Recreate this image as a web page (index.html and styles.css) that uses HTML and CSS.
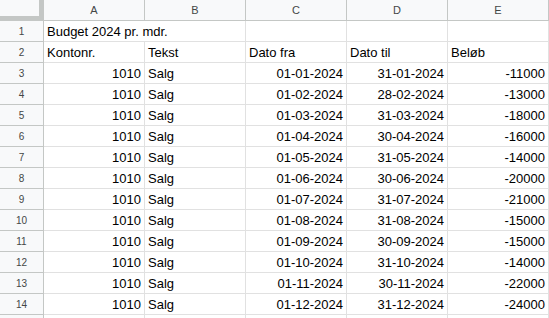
FILE: index.html
```html
<!DOCTYPE html>
<html>
<head>
<meta charset="utf-8">
<link rel="stylesheet" href="styles.css">
</head>
<body>
<div class="sheet">
  <div class="corner"></div>
  <div class="colhead">A</div>
  <div class="colhead">B</div>
  <div class="colhead">C</div>
  <div class="colhead">D</div>
  <div class="colhead last">E</div>

  <div class="rowhead">1</div>
  <div class="cell span2">Budget 2024 pr. mdr.</div>
  <div class="cell"></div>
  <div class="cell"></div>
  <div class="cell last"></div>

  <div class="rowhead">2</div>
  <div class="cell">Kontonr.</div>
  <div class="cell">Tekst</div>
  <div class="cell">Dato fra</div>
  <div class="cell">Dato til</div>
  <div class="cell last">Beløb</div>

  <div class="rowhead">3</div>
  <div class="cell num">1010</div><div class="cell">Salg</div><div class="cell num">01-01-2024</div><div class="cell num">31-01-2024</div><div class="cell num last">-11000</div>
  <div class="rowhead">4</div>
  <div class="cell num">1010</div><div class="cell">Salg</div><div class="cell num">01-02-2024</div><div class="cell num">28-02-2024</div><div class="cell num last">-13000</div>
  <div class="rowhead">5</div>
  <div class="cell num">1010</div><div class="cell">Salg</div><div class="cell num">01-03-2024</div><div class="cell num">31-03-2024</div><div class="cell num last">-18000</div>
  <div class="rowhead">6</div>
  <div class="cell num">1010</div><div class="cell">Salg</div><div class="cell num">01-04-2024</div><div class="cell num">30-04-2024</div><div class="cell num last">-16000</div>
  <div class="rowhead">7</div>
  <div class="cell num">1010</div><div class="cell">Salg</div><div class="cell num">01-05-2024</div><div class="cell num">31-05-2024</div><div class="cell num last">-14000</div>
  <div class="rowhead">8</div>
  <div class="cell num">1010</div><div class="cell">Salg</div><div class="cell num">01-06-2024</div><div class="cell num">30-06-2024</div><div class="cell num last">-20000</div>
  <div class="rowhead">9</div>
  <div class="cell num">1010</div><div class="cell">Salg</div><div class="cell num">01-07-2024</div><div class="cell num">31-07-2024</div><div class="cell num last">-21000</div>
  <div class="rowhead">10</div>
  <div class="cell num">1010</div><div class="cell">Salg</div><div class="cell num">01-08-2024</div><div class="cell num">31-08-2024</div><div class="cell num last">-15000</div>
  <div class="rowhead">11</div>
  <div class="cell num">1010</div><div class="cell">Salg</div><div class="cell num">01-09-2024</div><div class="cell num">30-09-2024</div><div class="cell num last">-15000</div>
  <div class="rowhead">12</div>
  <div class="cell num">1010</div><div class="cell">Salg</div><div class="cell num">01-10-2024</div><div class="cell num">31-10-2024</div><div class="cell num last">-14000</div>
  <div class="rowhead">13</div>
  <div class="cell num">1010</div><div class="cell">Salg</div><div class="cell num">01-11-2024</div><div class="cell num">30-11-2024</div><div class="cell num last">-22000</div>
  <div class="rowhead">14</div>
  <div class="cell num">1010</div><div class="cell">Salg</div><div class="cell num">01-12-2024</div><div class="cell num">31-12-2024</div><div class="cell num last">-24000</div>
  <div class="rowhead"></div>
  <div class="cell"></div><div class="cell"></div><div class="cell"></div><div class="cell"></div><div class="cell last"></div>
</div>
</body>
</html>
```

FILE: styles.css
```css
html, body {
  margin: 0;
  padding: 0;
  background: #ffffff;
  overflow: hidden;
}
.sheet {
  display: grid;
  grid-template-columns: 44px repeat(5, 101px);
  grid-auto-rows: 21px;
  font-family: "Liberation Sans", Arial, sans-serif;
  width: 549px;
  height: 318px;
  overflow: hidden;
}
.corner {
  box-sizing: border-box;
  background: #f8f9fa;
  border-right: 5px solid #c4c7c5;
  border-bottom: 5px solid #c4c7c5;
}
.colhead {
  box-sizing: border-box;
  background: #f8f9fa;
  border-right: 1px solid #c4c7c5;
  border-bottom: 1px solid #c4c7c5;
  color: #444746;
  font-size: 11px;
  display: flex;
  align-items: center;
  justify-content: center;
}
.rowhead {
  box-sizing: border-box;
  background: #f8f9fa;
  border-right: 1px solid #c4c7c5;
  border-bottom: 1px solid #c4c7c5;
  color: #444746;
  font-size: 10px;
  display: flex;
  align-items: center;
  justify-content: center;
}
.cell {
  box-sizing: border-box;
  border-right: 1px solid #e1e1e1;
  border-bottom: 1px solid #e1e1e1;
  color: #000000;
  font-size: 13px;
  padding: 0 3px 2px 3px;
  display: flex;
  align-items: flex-end;
  white-space: nowrap;
  overflow: visible;
}
.span2 {
  grid-column: span 2;
}
.num {
  justify-content: flex-end;
}
.last {
  border-right: 1px solid #c4c7c5;
}
.cell.last {
  border-right-color: #e1e1e1;
}
```
